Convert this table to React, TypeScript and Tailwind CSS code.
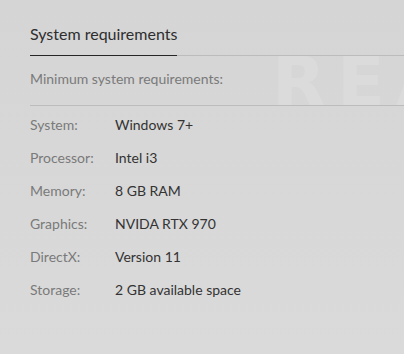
const specs = [
  { label: "System:", value: "Windows 7+" },
  { label: "Processor:", value: "Intel i3" },
  { label: "Memory:", value: "8 GB RAM" },
  { label: "Graphics:", value: "NVIDA RTX 970" },
  { label: "DirectX:", value: "Version 11" },
  { label: "Storage:", value: "2 GB available space" },
];

export default function App() {
  return (
    <div className="relative h-[354px] w-[404px] overflow-hidden bg-gradient-to-b from-[#d5d5d5] to-[#dadada] font-['Lato','Liberation_Sans',sans-serif]">
      {/* faded watermark behind the section */}
      <div
        aria-hidden
        className="pointer-events-none absolute left-[272px] top-[47px] w-[132px] select-none overflow-hidden whitespace-nowrap font-['DejaVu_Sans',sans-serif] text-[70px] font-bold leading-none tracking-[11px] text-[#dbdbdb]"
      >
        REA
      </div>
      <div className="relative pl-[30px] pt-[22px]">
        <div className="flex border-b border-[#bcbcbc]">
          <h2 className="-mb-px border-b border-[#262626] pb-[9px] text-[16px] leading-6 text-[#2e2e2e]">
            System requirements
          </h2>
        </div>
        <div className="border-b border-[#bcbcbc] pb-4 pt-[13px] text-[14px] leading-5 text-[#7a7a7a]">
          Minimum system requirements:
        </div>
        <div className="flex flex-col gap-[13px] pt-[9px]">
          {specs.map((s) => (
            <div key={s.label} className="flex text-[14px] leading-5">
              <span className="w-[85px] text-[#7a7a7a]">{s.label}</span>
              <span className="text-[#333333]">{s.value}</span>
            </div>
          ))}
        </div>
      </div>
    </div>
  );
}
